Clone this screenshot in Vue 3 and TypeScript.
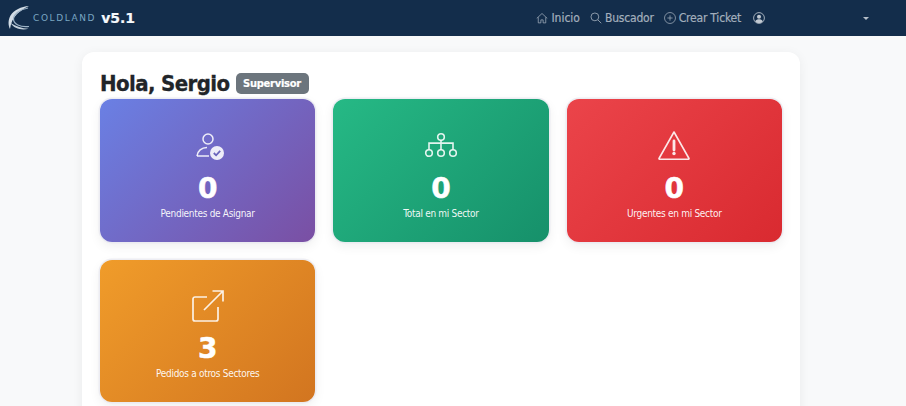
<script setup lang="ts">
interface Stat { value: number; label: string; tone: string; icon: string }
const stats: Stat[] = [
  { value: 0, label: 'Pendientes de Asignar', tone: 'purple', icon: 'user' },
  { value: 0, label: 'Total en mi Sector', tone: 'green', icon: 'org' },
  { value: 0, label: 'Urgentes en mi Sector', tone: 'red', icon: 'warn' },
  { value: 3, label: 'Pedidos a otros Sectores', tone: 'orange', icon: 'out' },
]
</script>

<template>
  <div class="page">
    <header class="nav">
      <div class="brand">
        <svg class="logo" width="22" height="26" viewBox="0 0 22 26" fill="none">
          <path d="M21 1C13 1.500 6 5 2.500 10.500C0 15 0 20 2 24C2.800 18 5 13 9 9C12.500 5.800 16 3.500 21 1Z" fill="#d3dde6" />
          <path d="M20 3C12 4.500 5.500 9 5.500 14C5.500 19 12 22.500 21 21.500" stroke="#9db3c6" stroke-width="1.200" />
          <path d="M2.500 18C6 23.500 13 25.500 20.500 23.800C14 23.500 8 21.500 2.500 18Z" fill="#c4d1dc" />
        </svg>
        <span class="coldland">COLDLAND</span>
        <span class="version">v5.1</span>
      </div>
      <nav class="links">
        <a class="link first">
          <svg width="12" height="12" viewBox="0 0 16 16" fill="none" stroke="currentColor" stroke-width="1">
            <path d="M1 8.500 8 2l7 6.500M3 7v7.500h3.500V10.500h3v4H13V7" />
          </svg>
          Inicio
        </a>
        <a class="link">
          <svg width="12" height="12" viewBox="0 0 16 16" fill="none" stroke="currentColor" stroke-width="1.100">
            <circle cx="6.500" cy="6.500" r="5.200" /><path d="m10.500 10.500 4.500 4.500" />
          </svg>
          Buscador
        </a>
        <a class="link last">
          <svg width="12" height="12" viewBox="0 0 16 16" fill="none" stroke="currentColor" stroke-width="1">
            <circle cx="8" cy="8" r="7.300" /><path d="M8 4.500v7M4.500 8h7" />
          </svg>
          Crear Ticket
        </a>
        <svg class="avatar" width="12" height="12" viewBox="0 0 16 16" fill="none">
          <circle cx="8" cy="8" r="7.200" stroke="currentColor" stroke-width="1.100" />
          <circle cx="8" cy="6.200" r="2.700" fill="currentColor" />
          <path d="M3 12.300C4 10.300 6 9.800 8 9.800s4 .5 5 2.500C12 14 10 14.800 8 14.800S4 14 3 12.300Z" fill="currentColor" />
        </svg>
        <span class="caret"></span>
      </nav>
    </header>

    <main class="main">
      <section class="panel">
        <div class="title-row">
          <h1>Hola, Sergio</h1>
          <span class="badge">Supervisor</span>
        </div>
        <div class="grid">
          <article v-for="s in stats" :key="s.label" class="stat" :class="s.tone">
            <div class="icon">
              <svg v-if="s.icon === 'user'" width="32" height="32" viewBox="-4 0 32 32" fill="none" stroke="currentColor" stroke-width="1.500">
                <circle cx="12" cy="8" r="5" />
                <path d="M1 25C1.500 20 5.500 16.500 11 16.500" />
                <path d="M1 25H13" />
                <circle cx="21" cy="22" r="7" fill="currentColor" stroke="none" />
                <path d="m17.800 22 2.300 2.300 4.100-4.400" stroke="#6a64bb" stroke-width="1.800" />
              </svg>
              <svg v-else-if="s.icon === 'org'" width="34" height="32" viewBox="0 0 34 32" fill="none" stroke="currentColor" stroke-width="1.600">
                <circle cx="17" cy="6" r="3.300" />
                <circle cx="5" cy="22" r="3.300" />
                <circle cx="17" cy="22" r="3.300" />
                <circle cx="29" cy="22" r="3.300" />
                <path d="M17 9.300v9.400M5 18.500v-6.400h24v6.400" />
              </svg>
              <svg v-else-if="s.icon === 'warn'" width="32" height="32" viewBox="0 0 32 32" fill="none" stroke="currentColor" stroke-width="1.600">
                <path d="M16 1 31 27.500a.5.500 0 0 1-.4.7H1.400a.5.500 0 0 1-.4-.7L16 1Z" stroke-linejoin="round" />
                <path d="M16 10v9" stroke-width="2.800" stroke-linecap="round" />
                <circle cx="16" cy="22.500" r="1.700" fill="currentColor" stroke="none" />
              </svg>
              <svg v-else width="32" height="32" viewBox="0 0 32 32" fill="none" stroke="currentColor" stroke-width="1.700">
                <path d="M15 7H3a2 2 0 0 0-2 2v20a2 2 0 0 0 2 2h21a2 2 0 0 0 2-2V17" />
                <path d="M12 20 31 1M20.500 1H31v10.500" />
              </svg>
            </div>
            <div class="value">{{ s.value }}</div>
            <div class="label">{{ s.label }}</div>
          </article>
        </div>
      </section>
    </main>
  </div>
</template>

<style>
html, body { margin: 0; background: #f8f9fa; overflow: hidden; }
</style>

<style scoped>
.page {
  width: 906px;
  height: 406px;
  overflow: hidden;
  background: #f8f9fa;
  font-family: "DejaVu Sans", Verdana, sans-serif;
  font-stretch: condensed;
}
.nav {
  height: 36px;
  background: #132d4b;
  display: flex;
  align-items: center;
  justify-content: space-between;
  box-sizing: border-box;
  padding: 0 37px 0 8px;
}
.brand { display: flex; align-items: center; }
.logo { margin-right: 3px; }
.coldland {
  font-stretch: normal;
  font-size: 9px;
  letter-spacing: 1.600px;
  color: #7aa6c2;
  margin-right: 5px;
}
.version {
  font-stretch: normal;
  font-size: 14px;
  font-weight: 700;
  -webkit-text-stroke: 0.2px currentColor;
  color: #f5f8fb;
}
.links { display: flex; align-items: center; color: #a3afbc; }
.link {
  display: flex;
  align-items: center;
  gap: 3px;
  font-size: 12px;
  letter-spacing: -0.2px;
  margin-right: 10px;
  -webkit-text-stroke: 0.2px currentColor;
}
.link.first { letter-spacing: 0; }
.link.last { margin-right: 12px; }
.avatar { color: #c1c9d2; margin-right: 98px; }
.caret {
  width: 0;
  height: 0;
  border-left: 3px solid transparent;
  border-right: 3px solid transparent;
  border-top: 3px solid #b6bfc9;
}
.main { display: flex; padding: 16px 0 0 82px; }
.panel {
  width: 718px;
  box-sizing: border-box;
  background: #fff;
  border-radius: 12px;
  box-shadow: 0 2px 12px rgba(0, 0, 0, 0.06);
  padding: 18px 18px 40px;
}
.title-row {
  display: flex;
  align-items: center;
  gap: 6px;
  height: 29px;
}
h1 {
  margin: 0 0 3px;
  font-size: 22px;
  font-weight: 700;
  letter-spacing: -0.6px;
  -webkit-text-stroke: 0.3px currentColor;
  color: #212529;
}
.badge {
  background: #6c757d;
  color: #fff;
  width: 73px;
  height: 21px;
  margin-bottom: 2px;
  box-sizing: border-box;
  border-radius: 5px;
  font-size: 11px;
  letter-spacing: -0.25px;
  -webkit-text-stroke: 0.2px currentColor;
  font-weight: 700;
  display: flex;
  align-items: center;
  justify-content: center;
}
.grid {
  display: grid;
  grid-template-columns: repeat(3, 1fr);
  gap: 18px;
}
.stat {
  height: 143px;
  box-sizing: border-box;
  border-radius: 12px;
  box-shadow: 0 0 0 1.500px rgba(232, 232, 240, 0.8), 0 4px 12px rgba(0, 0, 0, 0.07);
  color: #fff;
  display: flex;
  flex-direction: column;
  align-items: center;
  padding-top: 32px;
}
.purple { background: linear-gradient(135deg, #6a80e4, #7a4fa3); }
.green { background: linear-gradient(135deg, #26b985, #16906a); }
.red { background: linear-gradient(135deg, #eb444a, #d92a30); }
.orange { background: linear-gradient(135deg, #f09c2a, #d27520); height: 142px; padding-top: 30px; }
.icon { height: 32px; line-height: 0; color: rgba(255, 255, 255, 0.88); }
.value {
  font-stretch: normal;
  font-size: 28px;
  font-weight: 700;
  -webkit-text-stroke: 0.5px currentColor;
  line-height: 32px;
  margin-top: 10px;
}
.orange .value { margin-top: 11px; }
.label {
  font-size: 10px;
  letter-spacing: -0.3px;
  line-height: 14px;
  margin-top: 2px;
  color: rgba(255, 255, 255, 0.95);
}
</style>
